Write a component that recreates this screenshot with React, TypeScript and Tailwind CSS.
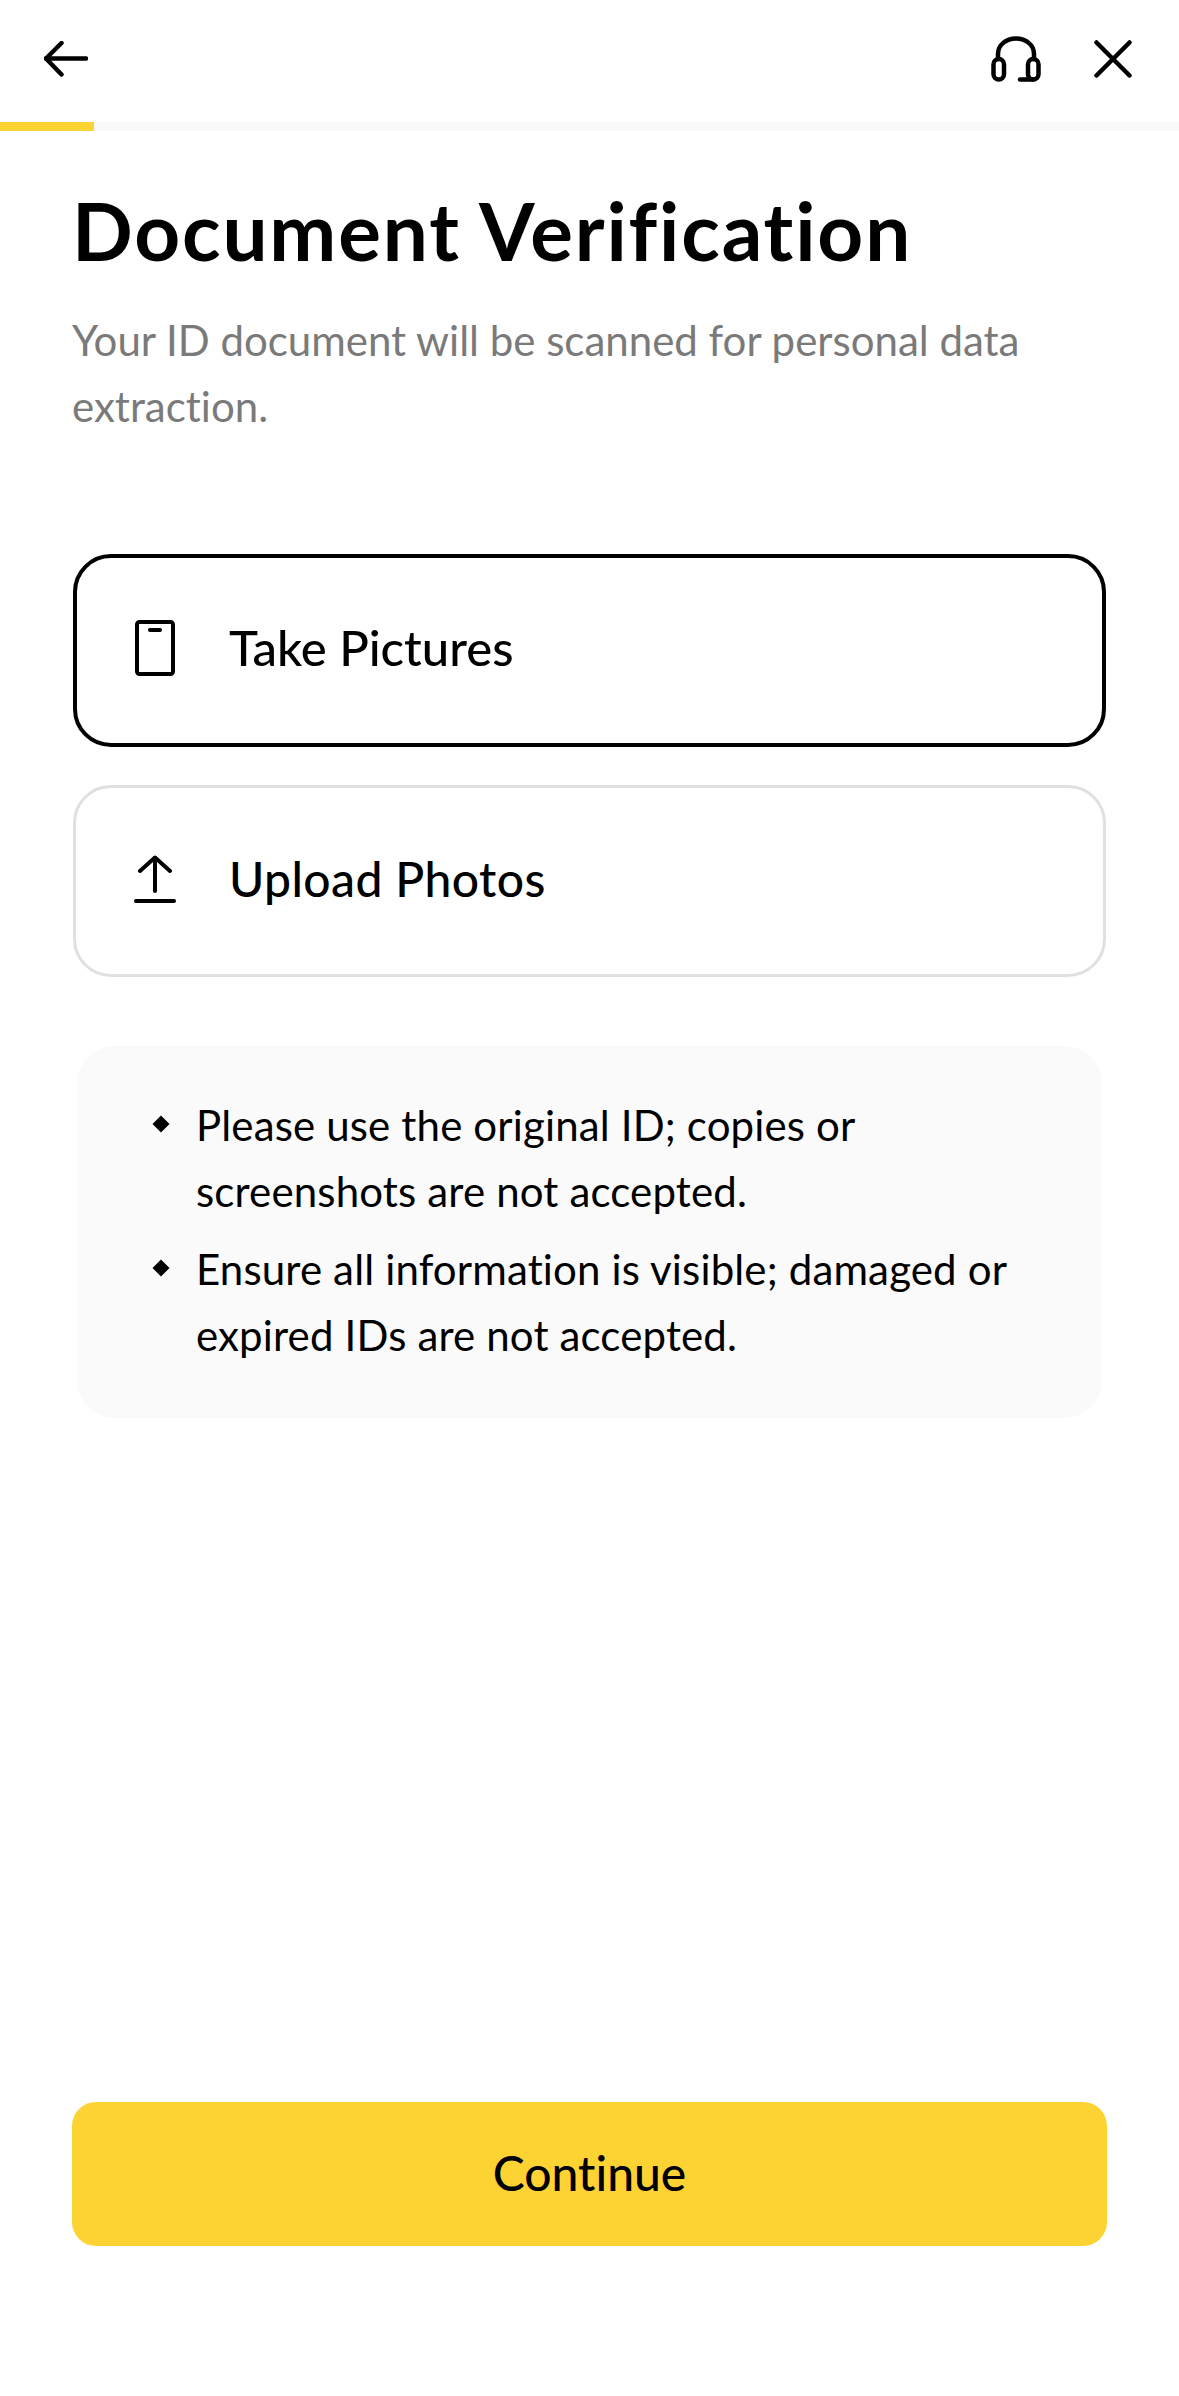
import React from "react";

function Back() {
  return (
    <svg width="44" height="36" viewBox="0 0 44 36" fill="none" stroke="#000" strokeWidth="4.5" strokeLinecap="round" strokeLinejoin="round">
      <path d="M2 17.500H42" />
      <path d="M17.500 2L2 17.500L17.500 33.500" />
    </svg>
  );
}

function Headset() {
  return (
    <svg width="50" height="46" viewBox="0 0 50 46" fill="none" stroke="#000" strokeWidth="4.5" strokeLinecap="round" strokeLinejoin="round">
      <path d="M7 23V18C7 9 15 2.500 25 2.500C35 2.500 43 9 43 18V23" />
      <rect x="2.500" y="23" width="10.500" height="20.500" rx="5.250" />
      <rect x="37" y="23" width="10.500" height="20.500" rx="5.250" />
      <path d="M29 43.500H42" />
    </svg>
  );
}

function Close() {
  return (
    <svg width="38" height="38" viewBox="0 0 38 38" fill="none" stroke="#000" strokeWidth="4.500" strokeLinecap="round">
      <path d="M2.500 2.500L35.500 35.500" />
      <path d="M35.500 2.500L2.500 35.500" />
    </svg>
  );
}

function Phone() {
  return (
    <svg width="40" height="56" viewBox="0 0 40 56" fill="none" stroke="#000" strokeWidth="4" strokeLinecap="round" strokeLinejoin="round">
      <rect x="2" y="2" width="36" height="52" rx="2.500" />
      <path d="M15 10H25" />
    </svg>
  );
}

function Upload() {
  return (
    <svg width="42" height="48" viewBox="0 0 42 48" fill="none" stroke="#000" strokeWidth="4" strokeLinecap="round" strokeLinejoin="round">
      <path d="M21 3V36" />
      <path d="M6 16L21 2.500L36 16" />
      <path d="M2 46H40" />
    </svg>
  );
}

function Bullet({ children }: { children: React.ReactNode }) {
  return (
    <li className="flex">
      <span className="mt-[26px] ml-[5px] mr-[29px] h-[12px] w-[12px] shrink-0 rotate-45 bg-black" />
      <span>{children}</span>
    </li>
  );
}

export default function App() {
  return (
    <div className="flex min-h-[2396px] w-full flex-col bg-white font-['Lato','Liberation_Sans',sans-serif] text-black [font-variant-ligatures:none]">
      <header className="flex h-[122px] items-center justify-between pb-[5px] pl-[44px] pr-[47px]">
        <Back />
        <div className="flex items-center gap-[53px]">
          <Headset />
          <Close />
        </div>
      </header>
      <div className="h-[9px] w-full bg-[#f9f9f9]">
        <div className="h-full w-[94px] bg-[#fdd333]" />
      </div>

      <main className="flex flex-1 flex-col px-[72px]">
        <h1 className="mt-[49px] text-[80px] font-bold leading-[100px] tracking-[1.85px]">Document Verification</h1>
        <p className="mt-[27px] text-[42px] leading-[66px] text-[#7a7a7a]">
          Your ID document will be scanned for personal data extraction.
        </p>

        <button className="mx-[1px] mt-[115px] flex h-[193px] items-center rounded-[38px] border-[4px] border-black pb-[5px] pl-[56px] text-[49px] font-medium">
          <span className="flex w-[44px] justify-center"><Phone /></span>
          <span className="ml-[52px]">Take Pictures</span>
        </button>
        <button className="mx-[1px] mt-[38px] flex h-[192px] items-center rounded-[38px] border-[3px] border-[#e0e0e0] pb-[4px] pl-[57px] text-[48px] font-medium">
          <span className="flex w-[44px] justify-center"><Upload /></span>
          <span className="ml-[52px] tracking-[0.4px]">Upload Photos</span>
        </button>

        <ul className="mx-[5px] mt-[69px] flex h-[372px] flex-col gap-[12px] rounded-[38px] bg-[#fafafa] pl-[73px] pr-[60px] pt-[46px] text-[42px] leading-[66px] tracking-[0.15px]">
          <Bullet>Please use the original ID; copies or screenshots are not accepted.</Bullet>
          <Bullet>Ensure all information is visible; damaged or expired IDs are not accepted.</Bullet>
        </ul>

        <button className="mb-[150px] mt-auto flex h-[144px] items-center justify-center rounded-[24px] bg-[#fdd333] pb-[3px] text-[48px] font-medium">
          Continue
        </button>
      </main>
    </div>
  );
}
